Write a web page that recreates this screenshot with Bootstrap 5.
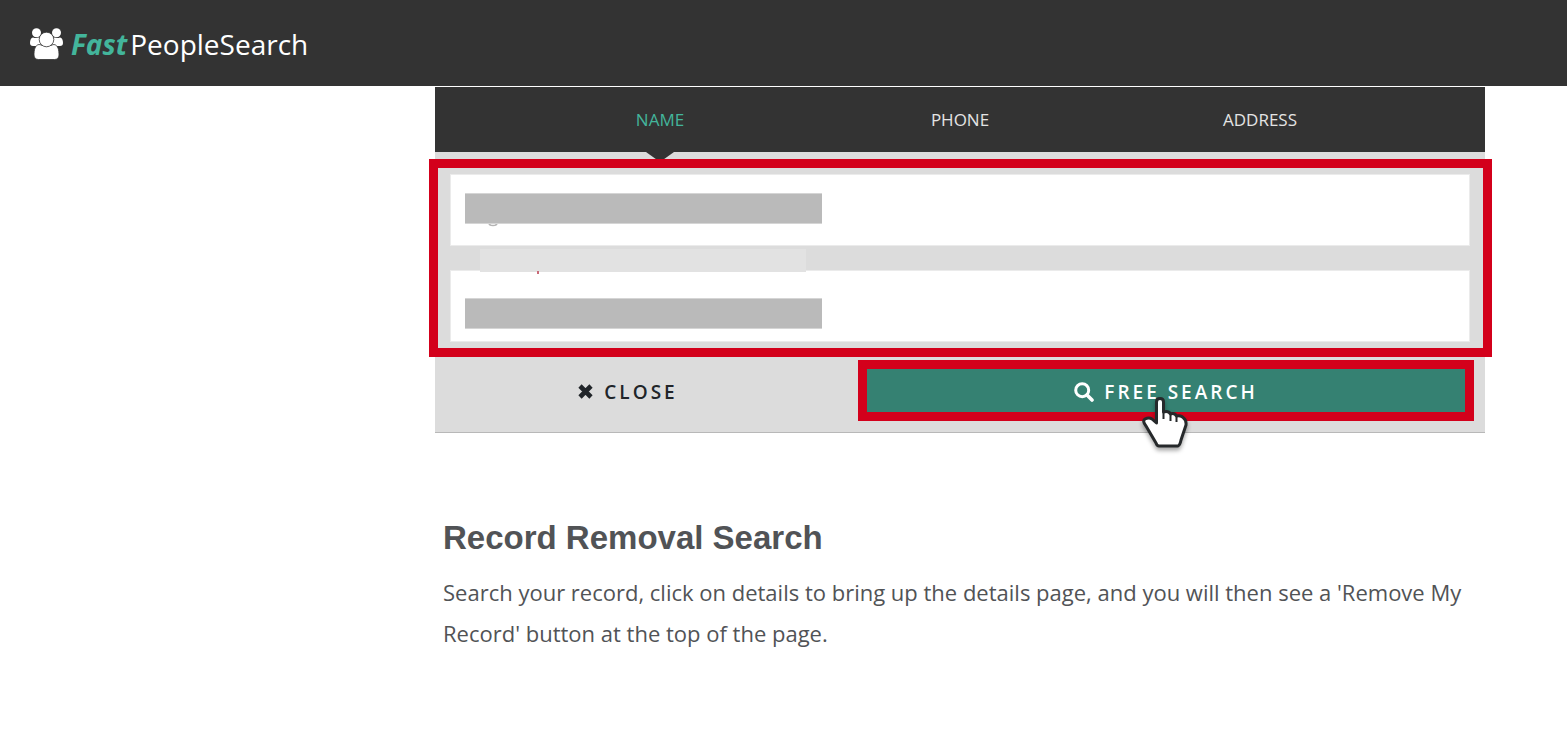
<!DOCTYPE html>
<html lang="en">
<head>
<meta charset="utf-8">
<meta name="viewport" content="width=device-width, initial-scale=1">
<title>FastPeopleSearch - Record Removal</title>
<link href="https://cdn.jsdelivr.net/npm/bootstrap@5.3.0/dist/css/bootstrap.min.css" rel="stylesheet">
<style>
  body { font-family: "Open Sans", "Noto Sans", sans-serif; background: #fff; color: #515356; }
  .site-bar { background: #333; height: 86px; padding: 2px 30px 0; }
  .brand { color: #fff; font-size: 28px; line-height: 40px; gap: 8px; }
  .brand em { color: #43b59b; font-weight: 700; margin-right: 3px; }
  .page-grid { display: grid; grid-template-columns: 435px minmax(0, 1fr) 82px; padding-top: 1px; }
  .page-grid > main { grid-column: 2; }
  .search-tabs { background: #333; height: 65px; padding: 0 75px; }
  .search-tabs .nav-link { color: #e4e4e4; font-size: 17px; line-height: 24px; height: 65px; padding: 21px 0; position: relative; }
  .search-tabs .nav-link.active { color: #43b59b; }
  .search-tabs .nav-link.active::after { content: ""; position: absolute; left: 50%; top: 100%; margin-left: -14px; border: 14px solid transparent; border-top: 10px solid #333; border-bottom: 0; }
  .search-form { background: #dcdcdc; border-bottom: 1px solid #b8b8b8; padding-top: 7px; }
  .field-frame { border: 9px solid #d3001b; margin: 0 -7px 0 -6px; padding: 6px 13px 6px 12px; gap: 24px; background: #dcdcdc; position: relative; }
  .field-frame .form-control { height: 72px; border: 1px solid #ebebeb; border-radius: 0; padding: 0 14px; font-size: 22px; }
  .cover { position: absolute; left: 15px; top: 19px; width: 35%; height: 31px; background: #bababa; border: solid #d5d5d5; border-width: 1px 0; }
  .cover.low { top: 28px; }
  .cover.note { left: 30px; top: -21px; width: 32%; height: 23px; background: #e2e2e2; border: 0; }
  .stray { position: absolute; left: 38px; top: 49px; }
  .stray.tick { left: 87px; top: 1px; }
  .form-actions { display: grid; grid-template-columns: 386fr 616fr; column-gap: 37px; padding: 3px 11px 11px 0; }
  .form-actions .btn { height: 61px; padding: 2px 0 0; border-radius: 0; font-size: 19px; line-height: 28px; letter-spacing: 3px; font-weight: 600; }
  .btn-close-form { color: #212529; border: 0; gap: 11px; }
  .btn-free { color: #fff; background: #358172; border: 9px solid #d3001b; gap: 10px; position: relative; }
  .btn-free:hover { color: #fff; background: #358172; border-color: #d3001b; }
  .pointer { position: absolute; left: 50%; top: 26px; margin-left: -24px; filter: drop-shadow(0 3px 2px rgba(0,0,0,.35)); }
  .removal { padding: 84px 8px 0; }
  .removal h1 { font: 700 33px/42px "Liberation Sans", Arial, sans-serif; margin: 0 0 13px; }
  .removal p { font-size: 22px; line-height: 41px; margin: 0; }
</style>
</head>
<body>
<header class="site-bar d-flex align-items-center">
  <a href="#" class="brand d-flex align-items-center text-decoration-none">
    <svg width="33" height="32" viewBox="0 0 33 32" fill="#fff" stroke="#333" aria-hidden="true">
      <g stroke="none"><circle cx="6.500" cy="4.800" r="4.500"/><circle cx="26.500" cy="4.800" r="4.500"/>
      <path d="M3 9.500C1 9.500 0 12 0 15c0 2 1 3 3 3h8v-8l-3-.5q-2 1-5 0zM30 9.500c2 0 3 2.500 3 5.500 0 2-1 3-3 3h-8v-8l3-.5q2 1 5 0z"/></g>
      <path d="M9 16.500C5 17 4 22 4 27c0 3 2 4.500 4.500 4.500h16C27 31.500 29 30 29 27c0-5-1-10-5-10.500q-7 3-15 0z" stroke-width=".8"/>
      <circle cx="16.500" cy="11.500" r="7.300" stroke-width=".8"/>
    </svg>
    <span><em>Fast</em>PeopleSearch</span>
  </a>
</header>
<div class="page-grid">
  <main>
    <nav class="search-tabs nav nav-justified">
      <a class="nav-link active" href="#name" aria-current="page">NAME</a>
      <a class="nav-link" href="#phone">PHONE</a>
      <a class="nav-link" href="#address">ADDRESS</a>
    </nav>
    <form class="search-form" onsubmit="return false">
      <div class="field-frame d-flex flex-column">
        <div class="position-relative">
          <input type="text" class="form-control" aria-label="Full name">
          <svg class="stray" width="10" height="4" viewBox="0 0 10 4" fill="none" stroke="#b4b4b4" stroke-width="1.500" aria-hidden="true"><path d="M1 0q0 2.500 4 2.500T9 0"/></svg>
          <div class="cover"></div>
        </div>
        <div class="position-relative">
          <input type="text" class="form-control" aria-label="City, state or zip">
          <div class="cover note"></div>
          <svg class="stray tick" width="2" height="3" aria-hidden="true"><path d="M0 0h2v3H0z" fill="#c96a78"/></svg>
          <div class="cover low"></div>
        </div>
      </div>
      <div class="form-actions">
        <button type="button" class="btn btn-close-form d-flex align-items-center justify-content-center">
          <svg width="15" height="15" viewBox="0 0 15 15" stroke="#212529" stroke-width="4.600" aria-hidden="true"><path d="M2 2l11 11M13 2L2 13"/></svg>
          <span>CLOSE</span>
        </button>
        <button type="submit" class="btn btn-free d-flex align-items-center justify-content-center">
          <svg width="20" height="20" viewBox="0 0 20 20" fill="none" stroke="#fff" aria-hidden="true"><circle cx="8.200" cy="8.200" r="6.500" stroke-width="3"/><path d="M13 13l5 5" stroke-width="3.600" stroke-linecap="round"/></svg>
          <span>FREE SEARCH</span>
          <svg class="pointer" width="48" height="54" viewBox="0 0 48 54" aria-hidden="true"><path d="M14.500 25V7q0-3.500 3.500-3.500T21.500 7v10q5-1.500 7 2 4-1.500 6 2 5-1 7 2 3 2 2.500 7l-5 15q-1 5-3 6H17q-2 0-3-3L4 31q-4-5-1-7 4-2 7 0l4.500 4z" fill="#fff" stroke="#26292b" stroke-width="3" stroke-linejoin="round"/><path d="M21.500 16v8M28.500 19v7M34.500 21v6" fill="none" stroke="#26292b" stroke-width="2"/></svg>
        </button>
      </div>
    </form>
    <section class="removal">
      <h1>Record Removal Search</h1>
      <p>Search your record, click on details to bring up the details page, and you will then see a 'Remove My Record' button at the top of the page.</p>
    </section>
  </main>
</div>
<script src="https://cdn.jsdelivr.net/npm/bootstrap@5.3.0/dist/js/bootstrap.bundle.min.js"></script>
</body>
</html>
